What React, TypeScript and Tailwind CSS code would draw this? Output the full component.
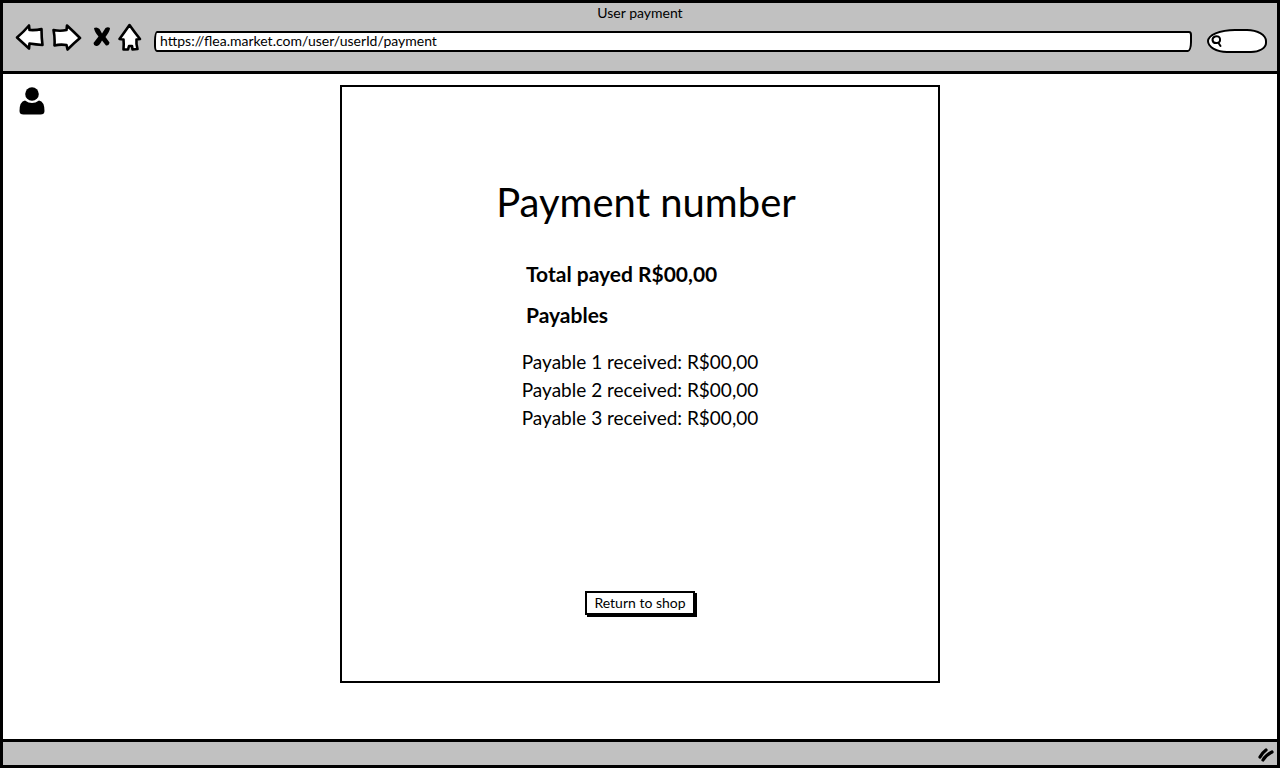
import { useState } from 'react';

const payables = [1, 2, 3].map((id) => ({ id, amount: 'R$00,00' }));

const navButtons = [
  {
    label: 'Back',
    path: 'M2 14.500 Q9 8.500 14 2.500 L14.500 7 Q21 7.500 26.500 6 Q26.500 15 27.500 22 Q21 21.500 14.500 20.500 L14 25.500 Q8 20 2 14.500 Z',
  },
  {
    label: 'Forward',
    path: 'M1.500 7 Q8 8.500 14.500 7 L15 2.500 Q22 9 28 15 Q22 20 15.500 26.500 L14.500 22 Q8 21 2.500 22.500 Q3 14 1.500 7 Z',
  },
];

function Toolbar() {
  const [url, setUrl] = useState('https://flea.market.com/user/userId/payment');
  return (
    <header className="flex h-[71px] shrink-0 flex-col border-b-3 border-black bg-[#c1c1c1]">
      <p className="text-center text-sm leading-5">User payment</p>
      <div className="flex items-center pr-[10px] pl-3">
        <nav aria-label="Browser" className="flex w-[139px] shrink-0 items-center">
          {navButtons.map((b) => (
            <button key={b.label} type="button" aria-label={b.label} className="mr-[7px]">
              <svg viewBox="0 0 30 30" className="h-[30px] w-[30px]" aria-hidden="true">
                <path d={b.path} fill="white" stroke="black" strokeWidth="2.6" strokeLinejoin="round" />
              </svg>
            </button>
          ))}
          <button type="button" aria-label="Stop" className="ml-1">
            <svg viewBox="0 0 18 22" className="h-[22px] w-[18px]" aria-hidden="true">
              <path
                d="M1 1 Q4 -0.500 6.500 2 L9 6.500 L12.500 1 Q15 -0.500 17 1 Q17 4 12.500 10 L16.500 15.500 Q16 19 13 18.500 L9 13.500 Q6 19.500 3 19 Q0.500 18.500 0.500 16 L5.500 9.500 Q1.500 5 1 1 Z"
                fill="black"
              />
            </svg>
          </button>
          <button type="button" aria-label="Home" className="ml-[7px]">
            <svg viewBox="0 0 24 30" className="h-[30px] w-6" aria-hidden="true">
              <path
                d="M11.500 2 Q16 8.500 22 16 L18.500 16.500 Q18 21 19.500 26 L14.500 26.500 L14 23 L11 23 L10 26.500 L5.500 26.500 Q6 21 5.500 16.500 L1.500 16 Q7 8.500 11.500 2 Z"
                fill="white"
                stroke="black"
                strokeWidth="2.6"
                strokeLinejoin="round"
              />
            </svg>
          </button>
        </nav>
        <input
          type="text"
          aria-label="Address"
          value={url}
          onChange={(e) => setUrl(e.target.value)}
          className="mt-[6px] h-[21px] min-w-0 flex-1 rounded-[3px_3px_4px_3px/10px_4px_10px_6px] border-2 border-black bg-white pb-[2px] pl-1 text-sm leading-4 outline-none"
        />
        <label className="mt-[6px] ml-[15px] flex h-6 w-[60px] shrink-0 items-center rounded-[28px_20px_16px_20px/12px_12px_10px_12px] border-2 border-black bg-white pl-[2px]">
          <svg viewBox="0 0 12 14" className="h-[14px] w-3 shrink-0" aria-hidden="true">
            <path
              d="M4 2.500 Q8.500 1.500 9 5 Q9.500 8.500 6 9 Q2 9.500 1.500 6 Q1.500 3.500 4 2.500 Z M7.500 9 L9.500 12"
              fill="none"
              stroke="black"
              strokeWidth="2"
              strokeLinecap="round"
            />
          </svg>
          <input type="search" aria-label="Search" className="w-full min-w-0 bg-transparent text-sm outline-none" />
        </label>
      </div>
    </header>
  );
}

export default function App() {
  return (
    <div className="flex min-h-screen flex-col border-3 border-black bg-white font-['Lato','Noto_Sans',sans-serif] text-black">
      <Toolbar />
      <div className="grid flex-1 grid-cols-[1fr_minmax(0,600px)_1fr] items-start pt-[11px] pb-14">
        <button type="button" aria-label="Account" className="mt-[2px] ml-4 w-[26px]">
          <svg viewBox="0 0 26 28" className="h-7 w-[26px]" aria-hidden="true">
            <circle cx="13" cy="7" r="6.800" fill="black" />
            <path d="M6 13.500 Q13 18.500 20 13.500 Q25.500 14.500 25.500 24 Q25.500 27.500 21.500 27.500 L4.500 27.500 Q0.500 27.500 0.500 24 Q0.500 14.500 6 13.500 Z" fill="black" />
          </svg>
        </button>
        <main className="flex min-h-[598px] flex-col items-center border-2 border-black pt-[89px] pb-[66px]">
          <h1 className="ml-3 text-[40px] leading-[52px]">Payment number</h1>
          <section className="mt-[34px] w-[234px]">
            <p className="pl-[3px] text-[21px] leading-6 font-bold whitespace-nowrap">Total payed R$00,00</p>
            <h2 className="mt-[17px] pl-[3px] text-[21px] leading-6 font-bold">Payables</h2>
            <ul className="-mx-1 mt-[21px] text-center text-[19px] leading-7 whitespace-nowrap">
              {payables.map((p) => (
                <li key={p.id}>
                  Payable {p.id} received: {p.amount}
                </li>
              ))}
            </ul>
          </section>
          <button
            type="button"
            className="mt-auto h-6 border-2 border-black bg-white px-[7px] text-sm leading-5 shadow-[2px_2px_0_0_#000]"
          >
            Return to shop
          </button>
        </main>
      </div>
      <footer className="flex h-[26px] shrink-0 items-center justify-end border-t-3 border-black bg-[#c1c1c1] pr-[2px]">
        <svg viewBox="0 0 18 16" className="h-4 w-[18px]" aria-hidden="true">
          <path d="M3 11 Q5 7 9 4 M6 14 Q9 9 15 6" fill="none" stroke="black" strokeWidth="3.200" strokeLinecap="round" />
        </svg>
      </footer>
    </div>
  );
}
